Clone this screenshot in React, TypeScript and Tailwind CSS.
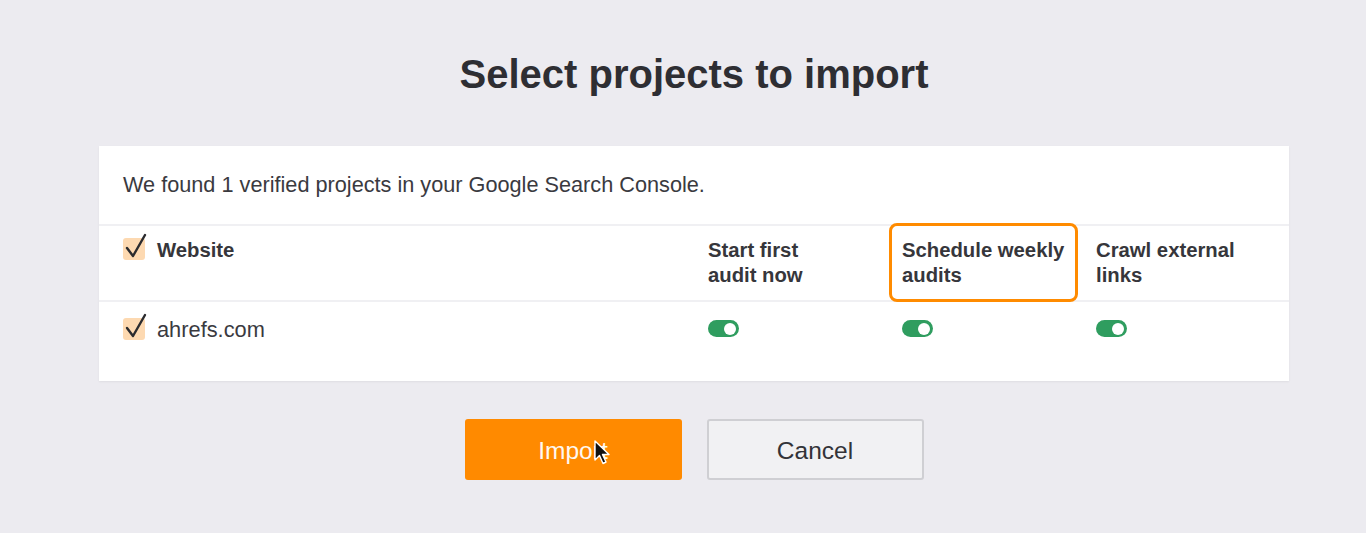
import React from 'react';

const Check = () => (
  <span className="relative inline-block w-[22px] h-[22px] rounded-[3px] bg-[#fdd9b1] shrink-0">
    <svg className="absolute left-[2px] -top-[5px]" width="22" height="26" viewBox="0 0 22 26" fill="none">
      <path d="M2 15 L8 23 L20 2" stroke="#2b2b2e" strokeWidth="2.4" strokeLinecap="round" strokeLinejoin="round" />
    </svg>
  </span>
);

const Toggle = () => (
  <span className="flex items-center w-[31px] h-[17px] rounded-full bg-[#2f9d5f] px-[3px] justify-end">
    <span className="w-[12px] h-[12px] rounded-full bg-white" />
  </span>
);

const Cursor = () => (
  <svg className="absolute left-[594px] top-[440px]" width="18" height="26" viewBox="0 0 18 26">
    <path d="M1 1 L1 20 L5.5 15.5 L9 23.5 L12 22 L8.5 14.5 L15 14.5 Z" fill="#111" stroke="#fff" strokeWidth="1.4" strokeLinejoin="round" />
  </svg>
);

export default function App() {
  return (
    <div className="relative w-[1366px] h-[533px] bg-[#ecebf0] overflow-hidden" style={{ fontFamily: '"Liberation Sans", Arial, sans-serif' }}>
      <div className="ml-[99px] w-[1190px]">
        <h1 className="pt-[50px] text-center text-[40px] leading-[48px] font-bold text-[#2e2e33]">Select projects to import</h1>

        <div className="mt-[48px] bg-white shadow-[0_1px_2px_rgba(0,0,0,0.06)]">
          <div className="h-[78px] px-[24px] pt-[27px] text-[21.7px] leading-[24px] text-[#3a3a3f]">
            We found 1 verified projects in your Google Search Console.
          </div>

          <div className="flex h-[76px] border-t-2 border-[#f0f0f3] text-[20.3px] leading-[25px] font-bold text-[#36363b]">
            <div className="flex-1 flex items-start gap-[12px] pl-[24px] pt-[12px]">
              <Check />
              <span>Website</span>
            </div>
            <div className="w-[194px] pt-[12px]">Start first<br />audit now</div>
            <div className="w-[194px]">
              <div className="-mt-[3px] -ml-[13px] w-[189px] h-[79px] rounded-[8px] border-[3px] border-[#ff8b00] pl-[10px] pt-[12px]">
                Schedule weekly<br />audits
              </div>
            </div>
            <div className="w-[193px] pt-[12px]">Crawl external<br />links</div>
          </div>

          <div className="flex h-[81px] border-t-2 border-[#f0f0f3] text-[21.8px] leading-[24px] text-[#3a3a3f]">
            <div className="flex-1 flex items-start gap-[12px] pl-[24px] pt-[16px]">
              <Check />
              <span>ahrefs.com</span>
            </div>
            <div className="w-[194px] pt-[18px]"><Toggle /></div>
            <div className="w-[194px] pt-[18px]"><Toggle /></div>
            <div className="w-[193px] pt-[18px]"><Toggle /></div>
          </div>
        </div>

        <div className="flex justify-center gap-[25px] mt-[38px]">
          <button className="w-[217px] h-[61px] pt-[3px] rounded-[3px] bg-[#ff8a00] text-[#fff8f0] text-[24.5px]">Import</button>
          <button className="w-[217px] h-[61px] pt-[3px] rounded-[3px] bg-[#f1f1f3] border-2 border-[#cfcfd3] text-[#333338] text-[24.5px]">Cancel</button>
        </div>
      </div>

      <Cursor />
    </div>
  );
}
